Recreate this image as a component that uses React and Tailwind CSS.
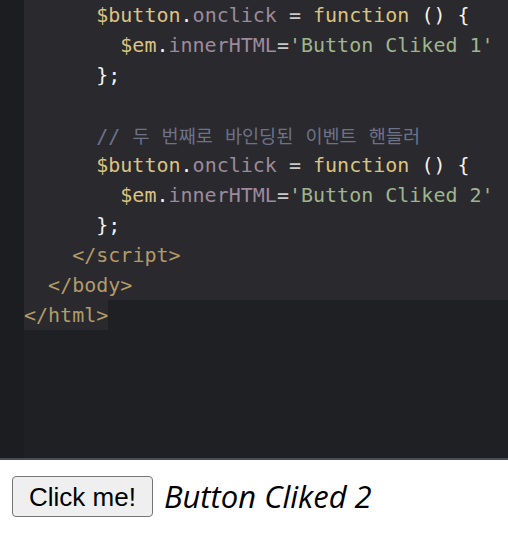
import React from 'react';

// token colours
const Y = 'text-[#dcc47f]';
const P = 'text-[#9c8b9e]';
const W = 'text-[#f2f2f2]';
const G = 'text-[#9fb590]';
const C = 'text-[#6e7288]';
const T = 'text-[#b39b68]';

const Line = ({ indent = 0, children }) => (
    <div className="h-[30px] whitespace-pre">
        {' '.repeat(indent)}
        {children}
    </div>
);

const Ko = ({ children }) => (
    <span className="text-[18.6px]" style={{ fontFamily: '"Noto Sans CJK KR", sans-serif' }}>{children}</span>
);

const App = () => {
    return (
        <div className="w-[508px] h-[556px] bg-white">
            {/* editor area */}
            <div className="h-[458px] flex bg-[#1f2024] border-b-2 border-[#4a4b57] box-content">
                <div className="w-[24px] bg-[#1c1d20]" />
                <div
                    className="flex-1 text-[20px] leading-[30px]"
                    style={{ fontFamily: '"DejaVu Sans Mono", "Noto Sans CJK KR", monospace' }}
                >
                    <div className="bg-[#29292e]">
                        <Line indent={6}>
                            <span className={Y}>$button</span><span className={W}>.</span><span className={P}>onclick</span>
                            <span className="text-[#c8c8c8]"> = </span><span className={Y}>function</span><span className={W}> () {'{'}</span>
                        </Line>
                        <Line indent={8}>
                            <span className={Y}>$em</span><span className={W}>.</span><span className={P}>innerHTML</span>
                            <span className="text-[#c8c8c8]">=</span><span className={G}>'Button Cliked 1'</span>
                        </Line>
                        <Line indent={6}><span className={W}>{'};'}</span></Line>
                        <Line />
                        <Line indent={6}>
                            <span className={C}>
                                {'// '}<Ko>두</Ko>{' '}<Ko>번째로</Ko>{' '}<Ko>바인딩된</Ko>{' '}<Ko>이벤트</Ko>{' '}<Ko>핸들러</Ko>
                            </span>
                        </Line>
                        <Line indent={6}>
                            <span className={Y}>$button</span><span className={W}>.</span><span className={P}>onclick</span>
                            <span className="text-[#c8c8c8]"> = </span><span className={Y}>function</span><span className={W}> () {'{'}</span>
                        </Line>
                        <Line indent={8}>
                            <span className={Y}>$em</span><span className={W}>.</span><span className={P}>innerHTML</span>
                            <span className="text-[#c8c8c8]">=</span><span className={G}>'Button Cliked 2'</span>
                        </Line>
                        <Line indent={6}><span className={W}>{'};'}</span></Line>
                        <Line indent={4}><span className={T}>{'</script>'}</span></Line>
                        <Line indent={2}><span className={T}>{'</body>'}</span></Line>
                    </div>
                    <div className="h-[30px]">
                        <span className={`inline-block h-[30px] bg-[#29292e] ${T}`}>{'</html>'}</span>
                    </div>
                </div>
            </div>

            {/* rendered output */}
            <div className="flex items-center pl-[12px] pt-[16px]">
                <button
                    className="h-[41px] px-[16px] border border-[#767676] rounded-[4px] bg-[#efefef] text-black text-[26px] leading-none"
                    style={{ fontFamily: '"Liberation Sans", Arial, sans-serif' }}
                >
                    Click me!
                </button>
                <em
                    className="ml-[11px] text-[31px] leading-none text-black"
                    style={{ fontFamily: '"Open Sans", sans-serif' }}
                >
                    Button Cliked 2
                </em>
            </div>
        </div>
    );
};

export default App;
